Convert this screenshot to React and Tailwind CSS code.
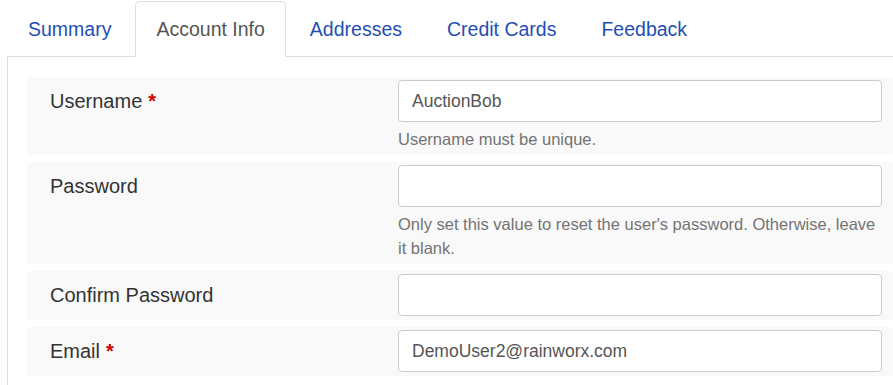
import React from "react";

const tabs = ["Summary", "Account Info", "Addresses", "Credit Cards", "Feedback"];

function Row({ label, required, value, help }) {
  return (
    <div className="flex bg-[#f9f9f9] rounded-[3px] pt-[3px] pb-[4px]">
      <div className="w-[371px] shrink-0 h-[42px] flex items-center pl-[23px] text-[20px] text-[#333]">
        <span>{label}</span>
        {required && <span className="ml-[6px] text-[#d00000] font-bold">*</span>}
      </div>
      <div className="w-[484px] shrink-0">
        <div className="h-[42px] bg-white border border-[#cccccc] rounded-[4px] flex items-center pl-[13px] text-[17.5px] text-[#555]">
          {value}
        </div>
        {help && (
          <div className="mt-[5px] text-[16.5px] leading-[24px] text-[#737373]">{help}</div>
        )}
      </div>
    </div>
  );
}

export default function App() {
  return (
    <div className="w-[893px] h-[385px] overflow-hidden bg-white font-['Liberation_Sans',Arial,sans-serif]">
      <div className="ml-[7px]">
        <ul className="flex pt-px border-b border-[#dddddd]">
          {tabs.map((t) => {
            const active = t === "Account Info";
            return (
              <li key={t} className="-mb-px mr-[3px]">
                <div
                  className={
                    active
                      ? "px-[20px] py-[13px] leading-[28px] text-[19.5px] text-[#555] bg-white border border-[#dddddd] border-b-transparent rounded-t-[5px]"
                      : "px-[20px] py-[13px] leading-[28px] text-[19.5px] text-[#1f4fb4] border border-transparent rounded-t-[5px]"
                  }
                >
                  {t}
                </div>
              </li>
            );
          })}
        </ul>
        <div className="border-l border-[#dddddd] pt-[20px] pl-[19px] h-[330px] flex flex-col gap-[7px]">
          <Row label="Username" required value="AuctionBob" help="Username must be unique." />
          <Row
            label="Password"
            value=""
            help="Only set this value to reset the user's password. Otherwise, leave it blank."
          />
          <Row label="Confirm Password" value="" />
          <Row label="Email" required value="DemoUser2@rainworx.com" />
        </div>
      </div>
    </div>
  );
}
